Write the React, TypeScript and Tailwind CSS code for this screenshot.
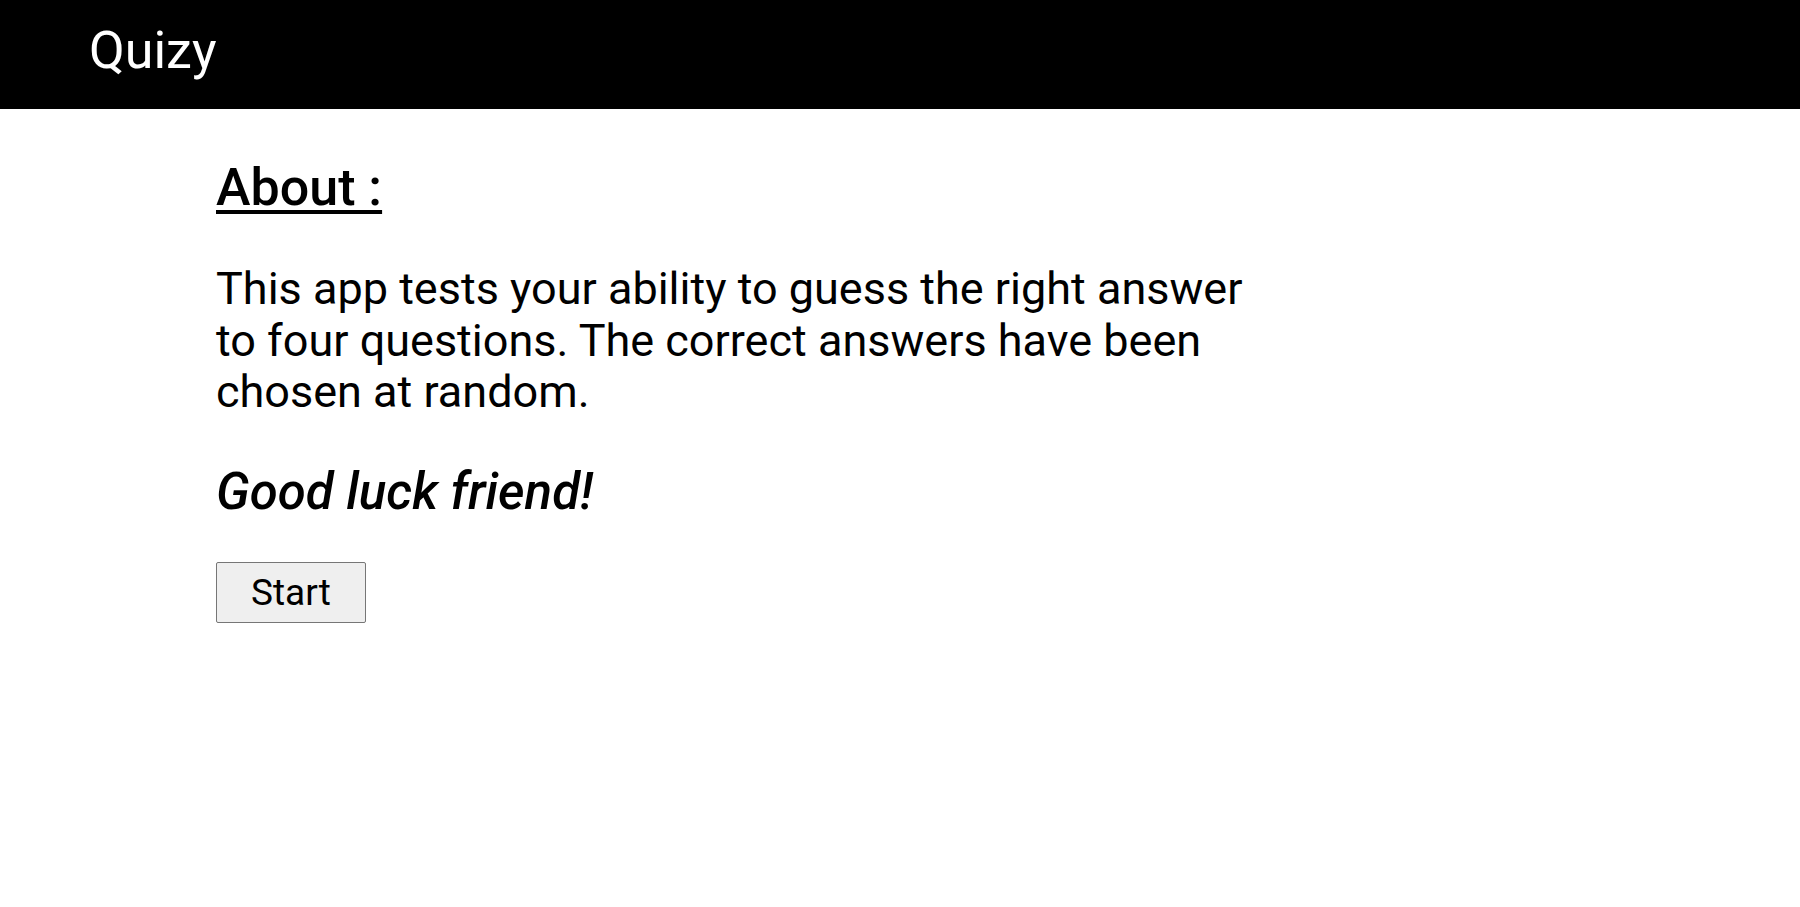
export default function App() {
  return (
    <div className="min-h-screen bg-white text-black font-['Roboto',sans-serif]">
      {/* Header */}
      <header className="h-[109px] bg-black pl-[89px] pt-[12px]">
        <h1 className="text-[52px] leading-normal font-normal text-white">Quizy</h1>
      </header>

      {/* About */}
      <main className="pl-[216px] pt-[40px]">
        <h2 className="text-[52px] leading-normal font-medium underline decoration-[4px] underline-offset-[5px]">
          About :
        </h2>
        <p className="mt-[36px] max-w-[1060px] text-[45px] leading-[51.5px]">
          This app tests your ability to guess the right answer to four questions. The correct answers have been chosen at random.
        </p>
        <p className="mt-[36px] text-[51px] leading-normal italic font-medium">Good luck friend!</p>
        <button className="mt-[32px] rounded-[2px] border border-[#767676] bg-[#efefef] px-[34px] py-[8px] text-[37px] leading-[43px] font-normal">
          Start
        </button>
      </main>
    </div>
  );
}
